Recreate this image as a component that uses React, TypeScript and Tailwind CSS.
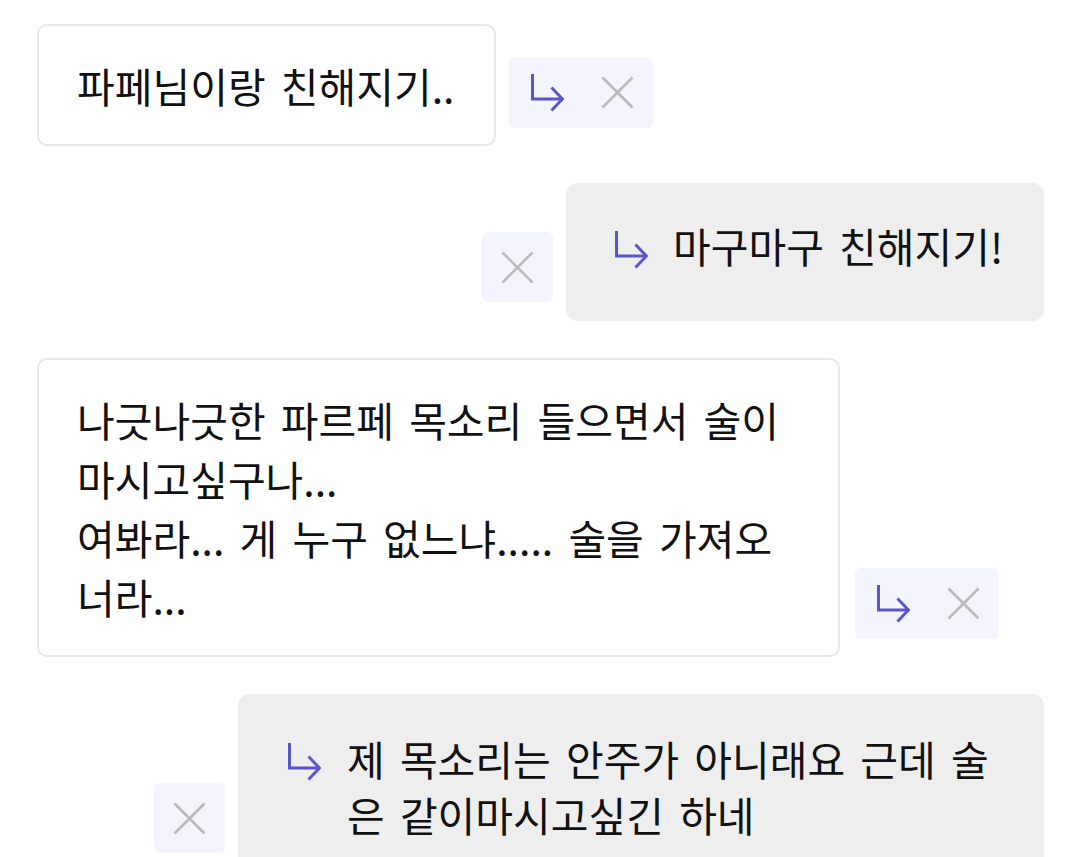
import React from "react";

const FONT = "font-['Noto_Sans_CJK_KR','Noto_Sans',sans-serif]";

function ReplyArrow() {
  return (
    <svg width="34" height="39" viewBox="0 0 34 39" fill="none" className="shrink-0">
      <path d="M2.5 1 V26 H32.5" stroke="#5856c8" strokeWidth="3" strokeLinejoin="miter" />
      <path d="M21.5 14.5 L32.5 26 L21.5 37.5" stroke="#5856c8" strokeWidth="3" strokeLinejoin="miter" />
    </svg>
  );
}

function CloseX() {
  return (
    <svg width="33" height="33" viewBox="0 0 33 33" fill="none" className="shrink-0">
      <path d="M1.5 1.5 L31.5 31.5 M31.5 1.5 L1.5 31.5" stroke="#bababa" strokeWidth="2.6" />
    </svg>
  );
}

function ActionBox() {
  return (
    <div className="flex h-[71px] w-[144px] shrink-0 items-center justify-center gap-[37px] rounded-[6px] bg-[#f4f4fc] pl-[2px]">
      <ReplyArrow />
      <CloseX />
    </div>
  );
}

function CloseBox() {
  return (
    <div className="flex h-[70px] w-[71px] shrink-0 items-center justify-center rounded-[6px] bg-[#f4f4fc]">
      <CloseX />
    </div>
  );
}

export default function App() {
  return (
    <div className={`${FONT} min-h-[857px] w-[1080px] overflow-hidden bg-white text-[41px] text-[#111111] [word-spacing:6px]`}>
      <div className="flex flex-col gap-[37px] pl-[37px] pr-[36px] pt-[24px]">
        {/* Row 1 */}
        <div className="flex items-end">
          <div className="w-[459px] whitespace-nowrap rounded-[10px] border-2 border-[#e8e8e8] bg-white pl-[38px] pr-[10px] pt-[30px] pb-[29px] leading-[59px]">
            파페님이랑 친해지기..
          </div>
          <div className="mb-[18px] ml-[13px]">
            <ActionBox />
          </div>
        </div>

        {/* Row 2 */}
        <div className="flex items-end justify-end">
          <div className="mb-[19px] mr-[13px]">
            <CloseBox />
          </div>
          <div className="flex w-[478px] items-start gap-[25px] whitespace-nowrap rounded-[12px] bg-[#eeeeee] pl-[48px] pr-[10px] pt-[34px] pb-[48px]">
            <div className="mt-[13px]">
              <ReplyArrow />
            </div>
            <div className="leading-[56px]">마구마구 친해지기!</div>
          </div>
        </div>

        {/* Row 3 */}
        <div className="flex items-end">
          <div className="w-[803px] whitespace-nowrap rounded-[10px] border-2 border-[#e8e8e8] bg-white pl-[38px] pr-[10px] pt-[30px] pb-[29px] leading-[59px]">
            나긋나긋한 파르페 목소리 들으면서 술이
            <br />
            마시고싶구나...
            <br />
            여봐라... 게 누구 없느냐..... 술을 가져오
            <br />
            너라...
          </div>
          <div className="mb-[18px] ml-[15px]">
            <ActionBox />
          </div>
        </div>

        {/* Row 4 */}
        <div className="flex items-end justify-end">
          <div className="mb-[19px] mr-[13px]">
            <CloseBox />
          </div>
          <div className="flex w-[806px] items-start gap-[26px] whitespace-nowrap rounded-[12px] bg-[#eeeeee] pl-[49px] pr-[10px] pt-[36px] pb-[30px]">
            <div className="mt-[12px]">
              <ReplyArrow />
            </div>
            <div className="leading-[56px]">
              제 목소리는 안주가 아니래요 근데 술
              <br />
              은 같이마시고싶긴 하네
            </div>
          </div>
        </div>
      </div>
    </div>
  );
}
